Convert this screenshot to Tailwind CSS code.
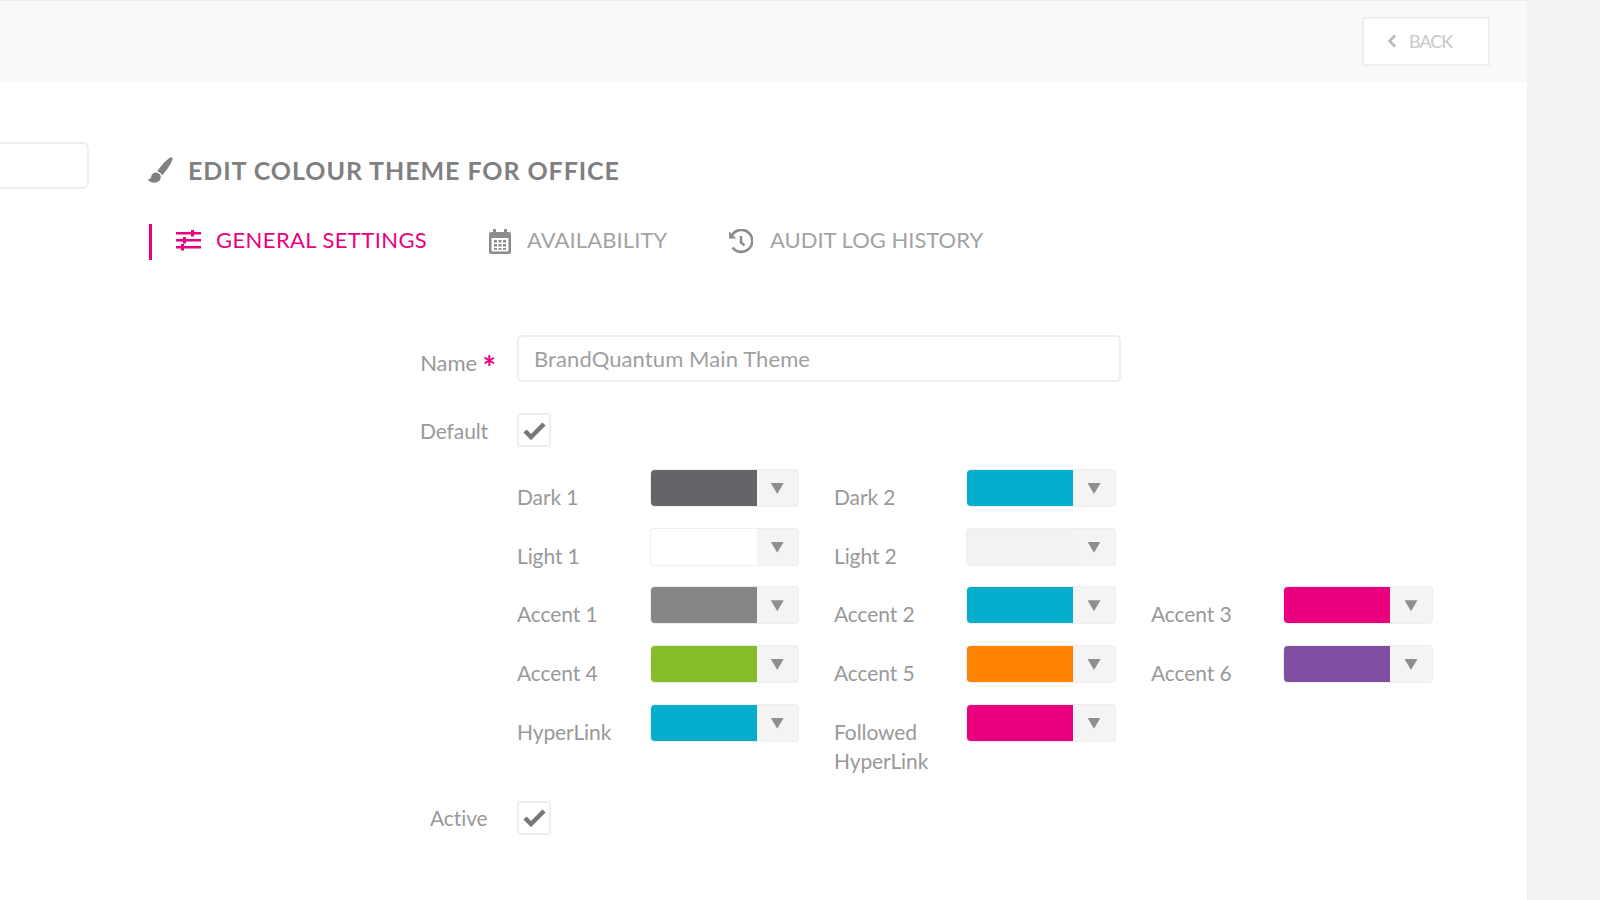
<!doctype html>
<html><head><meta charset="utf-8"><script src="https://cdn.jsdelivr.net/npm/@tailwindcss/browser@4"></script></head>
<body class="m-0 w-[1600px] h-[900px] overflow-hidden bg-[#f2f2f2] font-['Lato','Noto_Sans',sans-serif] text-[#999]">
<main class="w-[1527px] h-[900px] bg-white flex flex-col">
<header class="h-[82px] shrink-0 border-t border-[#eee] bg-[#f9f9f9] flex justify-end pt-[16px] pr-[37px]">
 <button class="w-[128px] h-[49px] pb-[1px] bg-white border-2 border-[#eee] flex items-center pl-[23px] text-[#c8c8c8] text-[18px] tracking-[-1px]">
  <svg class="w-[10px] h-[14px] mr-[12px]" viewBox="0 0 10 14" fill="none" stroke="#bbb" stroke-width="2.6"><path d="M8 1.5 2.5 7 8 12.5"/></svg>BACK</button>
</header>
<div class="flex items-start">
 <div class="w-[89px] h-[47px] mt-[60px] shrink-0 border-2 border-l-0 border-[#eee] rounded-r-[6px]"></div>
 <div class="ml-[58px] flex-1">
  <h1 class="mt-[73px] h-[30px] flex items-center text-[25px] leading-[30px] font-bold text-[#808080] tracking-[0.93px]">
   <svg class="w-[26px] h-[26px] mr-[15px]" viewBox="0 0 26 26" fill="#808080"><path d="M23.500.5c1.300-.6 2.500.6 2 2C23.500 8 19 14 15 18.500c-.8-2-2.500-3.500-4.800-4.200C14 9 19 3 23.500.5Z"/><path d="M9 15.500c3 .1 5 2.300 4.800 5-.2 3-3 5.200-6.300 5.200C4.500 25.700 2 24.500.5 22.500c2.300.2 3.600-1.300 3.900-3.500C4.800 17 6.500 15.500 9 15.500Z"/></svg>
   EDIT COLOUR THEME FOR OFFICE</h1>
  <nav class="mt-[39px] ml-[2px] h-[36px] flex text-[22px]">
   <div class="flex items-center h-[36px] pb-[6px] border-l-[3px] border-[#ea007f] pl-[24px] text-[#ea007f] w-[338px] tracking-[0.4px]">
    <svg class="w-[25px] h-[22px] mr-[15px] mt-[2px]" viewBox="0 0 25 22" fill="#ea007f"><rect y="3" width="25" height="2.500"/><rect y="10" width="25" height="2.500"/><rect y="17" width="25" height="2.500"/><rect x="15" y="1" width="3" height="6.500"/><rect x="7" y="8" width="3" height="6.500"/><rect x="5" y="15" width="3" height="6.500"/></svg>
    GENERAL SETTINGS</div>
   <div class="flex items-center h-[36px] pb-[6px] w-[243px] pl-[2px] text-[#a3a3a3] tracking-[0.1px]">
    <svg class="w-[22px] h-[25px] mr-[16px] mt-[4px]" viewBox="0 0 22 25" fill="#8c8c8c"><path fill-rule="evenodd" d="M4 0h3v3h8V0h3v3h2a2 2 0 0 1 2 2v18a2 2 0 0 1-2 2H2a2 2 0 0 1-2-2V5a2 2 0 0 1 2-2h2V0ZM2.500 9v13.500h17V9h-17Z"/><path d="M5 11h3v2.500H5zM9.500 11h3v2.500h-3zM14 11h3v2.500h-3zM5 15h3v2.500H5zM9.500 15h3v2.500h-3zM14 15h3v2.500h-3zM5 19h3v1.800H5zM9.500 19h3v1.800h-3zM14 19h3v1.800h-3z"/></svg>
    AVAILABILITY</div>
   <div class="flex items-center h-[36px] pb-[6px] text-[#a3a3a3]">
    <svg class="w-[25px] h-[25px] -ml-[2px] mr-[17px] mt-[5px]" viewBox="0 0 25 25" fill="none" stroke="#8c8c8c" stroke-width="2.600"><path d="M4.500 18.500A11 11 0 1 0 3.700 6.500"/><path d="M13 7v6.500l3.500 3"/><path d="M1 2.500v7h7.500Z" fill="#8c8c8c" stroke="none"/></svg>
    AUDIT LOG HISTORY</div>
  </nav>
  <form class="mt-[75px] text-[21px] leading-[29px] tracking-[-0.1px]">
   <div class="flex items-start">
    <label class="w-[370px] text-right pt-[13px] pr-[21px] text-[22px]">Name <span class="text-[#ea007f] font-bold text-[32px] leading-[20px] align-[-9px]">*</span></label>
    <div class="w-[604px] h-[47px] border-2 border-[#eee] rounded-[5px] px-[15px] text-[22px] leading-[44px] text-[#a0a0a0] tracking-[0.1px]">BrandQuantum Main Theme</div>
   </div>
   <div class="flex items-center mt-[31px] h-[34px]">
    <label class="w-[370px] pl-[273px] shrink-0">Default</label>
    <span class="w-[34px] h-[34px] border-2 border-[#eee] rounded-[3px] flex items-center justify-center"><svg class="w-[23px] h-[19px]" viewBox="0 0 23 19" fill="none" stroke="#777" stroke-width="4.500"><path d="m2 10 6 6L21 3"/></svg></span>
   </div>
   <div class="ml-[370px] mt-[22px] grid grid-cols-[317px_317px_317px] gap-y-[16.67px]">
    <div class="flex items-start"><span class="w-[132.5px] pt-[13px]">Dark 1</span><div class="w-[149.5px] h-[38px] flex rounded-[4px] border border-[#eee] bg-[#f4f4f4]"><span class="w-[106px] rounded-l-[4px] bg-[#636569]"></span><span class="flex-1 flex justify-center pt-[13px]"><span class="w-[13px] h-[11px] bg-[#8f8f8f] [clip-path:polygon(0_0,100%_0,50%_100%)]"></span></span></div></div>
    <div class="flex items-start"><span class="w-[132px] pt-[13px]">Dark 2</span><div class="w-[150px] h-[38px] flex rounded-[4px] border border-[#eee] bg-[#f4f4f4]"><span class="w-[106px] rounded-l-[4px] bg-[#05adcc]"></span><span class="flex-1 flex justify-center pt-[13px]"><span class="w-[13px] h-[11px] bg-[#8f8f8f] [clip-path:polygon(0_0,100%_0,50%_100%)]"></span></span></div></div>
    <div></div>
    <div class="flex items-start"><span class="w-[132.5px] pt-[13px]">Light 1</span><div class="w-[149.5px] h-[38px] flex rounded-[4px] border border-[#eee] bg-[#f4f4f4]"><span class="w-[106px] rounded-l-[4px] bg-white"></span><span class="flex-1 flex justify-center pt-[13px]"><span class="w-[13px] h-[11px] bg-[#8f8f8f] [clip-path:polygon(0_0,100%_0,50%_100%)]"></span></span></div></div>
    <div class="flex items-start"><span class="w-[132px] pt-[13px]">Light 2</span><div class="w-[150px] h-[38px] flex rounded-[4px] border border-[#eee] bg-[#f4f4f4]"><span class="w-[106px] rounded-l-[4px] bg-[#f2f2f2]"></span><span class="flex-1 flex justify-center pt-[13px]"><span class="w-[13px] h-[11px] bg-[#8f8f8f] [clip-path:polygon(0_0,100%_0,50%_100%)]"></span></span></div></div>
    <div></div>
    <div class="flex items-start"><span class="w-[132.5px] pt-[13px]">Accent 1</span><div class="w-[149.5px] h-[38px] flex rounded-[4px] border border-[#eee] bg-[#f4f4f4]"><span class="w-[106px] rounded-l-[4px] bg-[#868686]"></span><span class="flex-1 flex justify-center pt-[13px]"><span class="w-[13px] h-[11px] bg-[#8f8f8f] [clip-path:polygon(0_0,100%_0,50%_100%)]"></span></span></div></div>
    <div class="flex items-start"><span class="w-[132px] pt-[13px]">Accent 2</span><div class="w-[150px] h-[38px] flex rounded-[4px] border border-[#eee] bg-[#f4f4f4]"><span class="w-[106px] rounded-l-[4px] bg-[#05adcc]"></span><span class="flex-1 flex justify-center pt-[13px]"><span class="w-[13px] h-[11px] bg-[#8f8f8f] [clip-path:polygon(0_0,100%_0,50%_100%)]"></span></span></div></div>
    <div class="flex items-start"><span class="w-[132px] pt-[13px]">Accent 3</span><div class="w-[150px] h-[38px] flex rounded-[4px] border border-[#eee] bg-[#f4f4f4]"><span class="w-[106px] rounded-l-[4px] bg-[#ea007f]"></span><span class="flex-1 flex justify-center pt-[13px]"><span class="w-[13px] h-[11px] bg-[#8f8f8f] [clip-path:polygon(0_0,100%_0,50%_100%)]"></span></span></div></div>
    <div class="flex items-start"><span class="w-[132.5px] pt-[13px]">Accent 4</span><div class="w-[149.5px] h-[38px] flex rounded-[4px] border border-[#eee] bg-[#f4f4f4]"><span class="w-[106px] rounded-l-[4px] bg-[#84bd26]"></span><span class="flex-1 flex justify-center pt-[13px]"><span class="w-[13px] h-[11px] bg-[#8f8f8f] [clip-path:polygon(0_0,100%_0,50%_100%)]"></span></span></div></div>
    <div class="flex items-start"><span class="w-[132px] pt-[13px]">Accent 5</span><div class="w-[150px] h-[38px] flex rounded-[4px] border border-[#eee] bg-[#f4f4f4]"><span class="w-[106px] rounded-l-[4px] bg-[#ff8200]"></span><span class="flex-1 flex justify-center pt-[13px]"><span class="w-[13px] h-[11px] bg-[#8f8f8f] [clip-path:polygon(0_0,100%_0,50%_100%)]"></span></span></div></div>
    <div class="flex items-start"><span class="w-[132px] pt-[13px]">Accent 6</span><div class="w-[150px] h-[38px] flex rounded-[4px] border border-[#eee] bg-[#f4f4f4]"><span class="w-[106px] rounded-l-[4px] bg-[#814ea4]"></span><span class="flex-1 flex justify-center pt-[13px]"><span class="w-[13px] h-[11px] bg-[#8f8f8f] [clip-path:polygon(0_0,100%_0,50%_100%)]"></span></span></div></div>
    <div class="flex items-start"><span class="w-[132.5px] pt-[13px]">HyperLink</span><div class="w-[149.5px] h-[38px] flex rounded-[4px] border border-[#eee] bg-[#f4f4f4]"><span class="w-[106px] rounded-l-[4px] bg-[#05adcc]"></span><span class="flex-1 flex justify-center pt-[13px]"><span class="w-[13px] h-[11px] bg-[#8f8f8f] [clip-path:polygon(0_0,100%_0,50%_100%)]"></span></span></div></div>
    <div class="flex items-start"><span class="w-[132px] pt-[13px]">Followed<br>HyperLink</span><div class="w-[150px] h-[38px] flex rounded-[4px] border border-[#eee] bg-[#f4f4f4]"><span class="w-[106px] rounded-l-[4px] bg-[#ea007f]"></span><span class="flex-1 flex justify-center pt-[13px]"><span class="w-[13px] h-[11px] bg-[#8f8f8f] [clip-path:polygon(0_0,100%_0,50%_100%)]"></span></span></div></div>
   </div>
   <div class="flex items-center mt-[26px] h-[34px]">
    <label class="w-[370px] pl-[283px] shrink-0">Active</label>
    <span class="w-[34px] h-[34px] border-2 border-[#eee] rounded-[3px] flex items-center justify-center"><svg class="w-[23px] h-[19px]" viewBox="0 0 23 19" fill="none" stroke="#777" stroke-width="4.500"><path d="m2 10 6 6L21 3"/></svg></span>
   </div>
  </form>
 </div>
</div>
</main>
</body></html>
